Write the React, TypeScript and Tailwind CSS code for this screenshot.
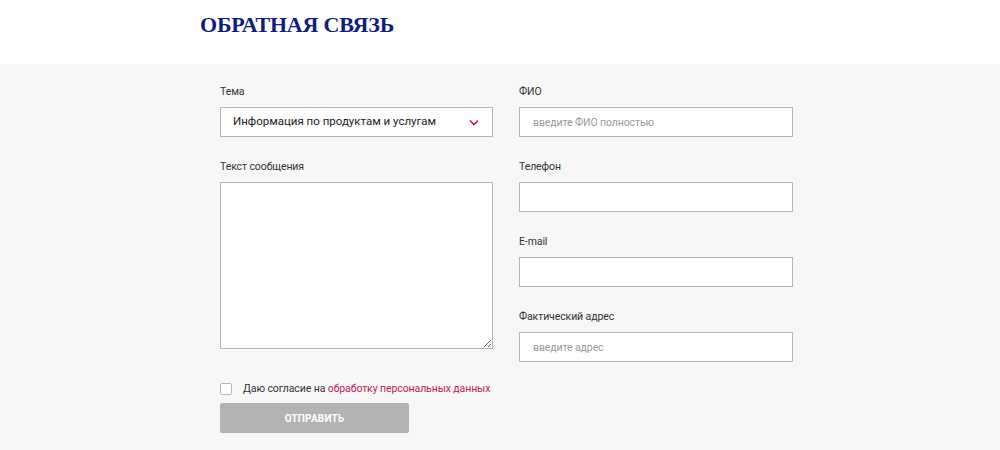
import React from 'react';

const labelCls = 'block text-[10.5px] tracking-[-0.1px] leading-[13px] text-[#333] mb-[9px]';
const inputCls =
  'block w-full h-[30px] bg-white border border-[#b5b5b5] px-[13px] text-[10.5px] tracking-[-0.1px] text-[#333] placeholder:text-[#999] outline-none';

function Field({ label, placeholder }: { label: string; placeholder?: string }) {
  return (
    <div className="mb-[23px]">
      <label className={labelCls}>{label}</label>
      <input className={inputCls} placeholder={placeholder} />
    </div>
  );
}

export default function App() {
  return (
    <div className="w-[1000px] h-[450px] overflow-hidden bg-[#f7f7f7] font-['Roboto','Liberation_Sans',Arial,sans-serif]">
      {/* Шапка */}
      <div className="h-[64px] bg-white pl-[200px] pt-[12px]">
        <h1 className="font-['Liberation_Serif',serif] font-bold text-[22px] tracking-[-0.2px] leading-[26px] text-[#101c85]">
          ОБРАТНАЯ СВЯЗЬ
        </h1>
      </div>

      {/* Форма */}
      <div className="pl-[220px] pt-[21px] flex gap-[26px]">
        <div className="w-[273px]">
          <div className="mb-[23px]">
            <label className={labelCls}>Тема</label>
            <div className="h-[30px] bg-white border border-[#b5b5b5] pl-[12px] pr-[13px] flex items-center justify-between">
              <span className="text-[11.5px] text-[#222]">Информация по продуктам и услугам</span>
              <svg width="10" height="7" viewBox="0 0 10 7" fill="none">
                <path d="M1 1.5 L5 5.5 L9 1.5" stroke="#c2185b" strokeWidth="1.6" />
              </svg>
            </div>
          </div>
          <div>
            <label className={labelCls}>Текст сообщения</label>
            <textarea className="block w-full h-[167px] bg-white border border-[#b5b5b5] resize-y outline-none" />
          </div>
          <div className="mt-[33px] h-[14px] flex items-center whitespace-nowrap">
            <span className="shrink-0 w-[12px] h-[12px] bg-white border border-[#b5b5b5] rounded-[2px]" />
            <span className="ml-[11px] text-[10.5px] tracking-[-0.1px] text-[#333]">
              Даю согласие на <span className="text-[#c2185b]">обработку персональных данных</span>
            </span>
          </div>
          <button className="block mt-[7px] w-[189px] h-[30px] rounded-[2px] bg-[#b3b3b3] text-white text-[10px] font-bold tracking-[0.2px]">
            ОТПРАВИТЬ
          </button>
        </div>

        <div className="w-[274px]">
          <Field label="ФИО" placeholder="введите ФИО полностью" />
          <Field label="Телефон" />
          <Field label="E-mail" />
          <Field label="Фактический адрес" placeholder="введите адрес" />
        </div>
      </div>
    </div>
  );
}
